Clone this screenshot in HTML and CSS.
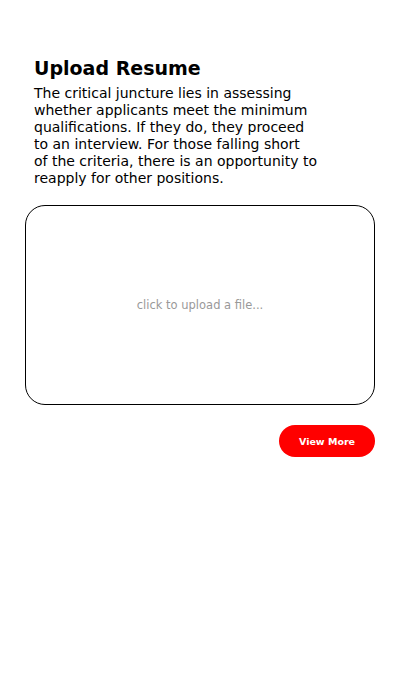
FILE: index.html
```html
<!DOCTYPE html>
<html>
<head>
<meta charset="utf-8">
<link rel="stylesheet" href="styles.css">
</head>
<body>
<main class="page">
  <section class="intro">
    <h1 class="title">Upload Resume</h1>
    <p class="desc">The critical juncture lies in assessing<br>whether applicants meet the minimum<br>qualifications. If they do, they proceed<br>to an interview. For those falling short<br>of the criteria, there is an opportunity to<br>reapply for other positions.</p>
  </section>
  <label class="dropzone">
    <span class="dropzone-text">click to upload a file...</span>
  </label>
  <div class="actions">
    <button class="btn-primary">View More</button>
  </div>
</main>
</body>
</html>
```
FILE: styles.css
```css
* { box-sizing: border-box; }
html, body { margin: 0; padding: 0; background: #fff; }
body { font-family: "DejaVu Sans", sans-serif; color: #000; }
.page {
  padding: 55px 25px 0 25px;
  display: flex;
  flex-direction: column;
}
.intro { padding: 0 9px; }
.title {
  margin: 0;
  font-size: 19px;
  font-weight: 700;
  line-height: 26px;
}
.desc {
  margin: 4px 0 0 0;
  font-size: 14px;
  line-height: 17px;
  white-space: nowrap;
}
.dropzone {
  margin-top: 18px;
  height: 200px;
  border: 1px solid #000;
  border-radius: 20px;
  display: flex;
  align-items: center;
  justify-content: center;
}
.dropzone-text { font-size: 11.5px; color: #999; }
.actions {
  margin-top: 20px;
  display: flex;
  justify-content: flex-end;
}
.btn-primary {
  width: 96px;
  height: 32px;
  border: none;
  border-radius: 16px;
  background: #ff0000;
  color: #fff;
  font-family: "DejaVu Sans", sans-serif;
  font-size: 9.5px;
  font-weight: 700;
}
```
